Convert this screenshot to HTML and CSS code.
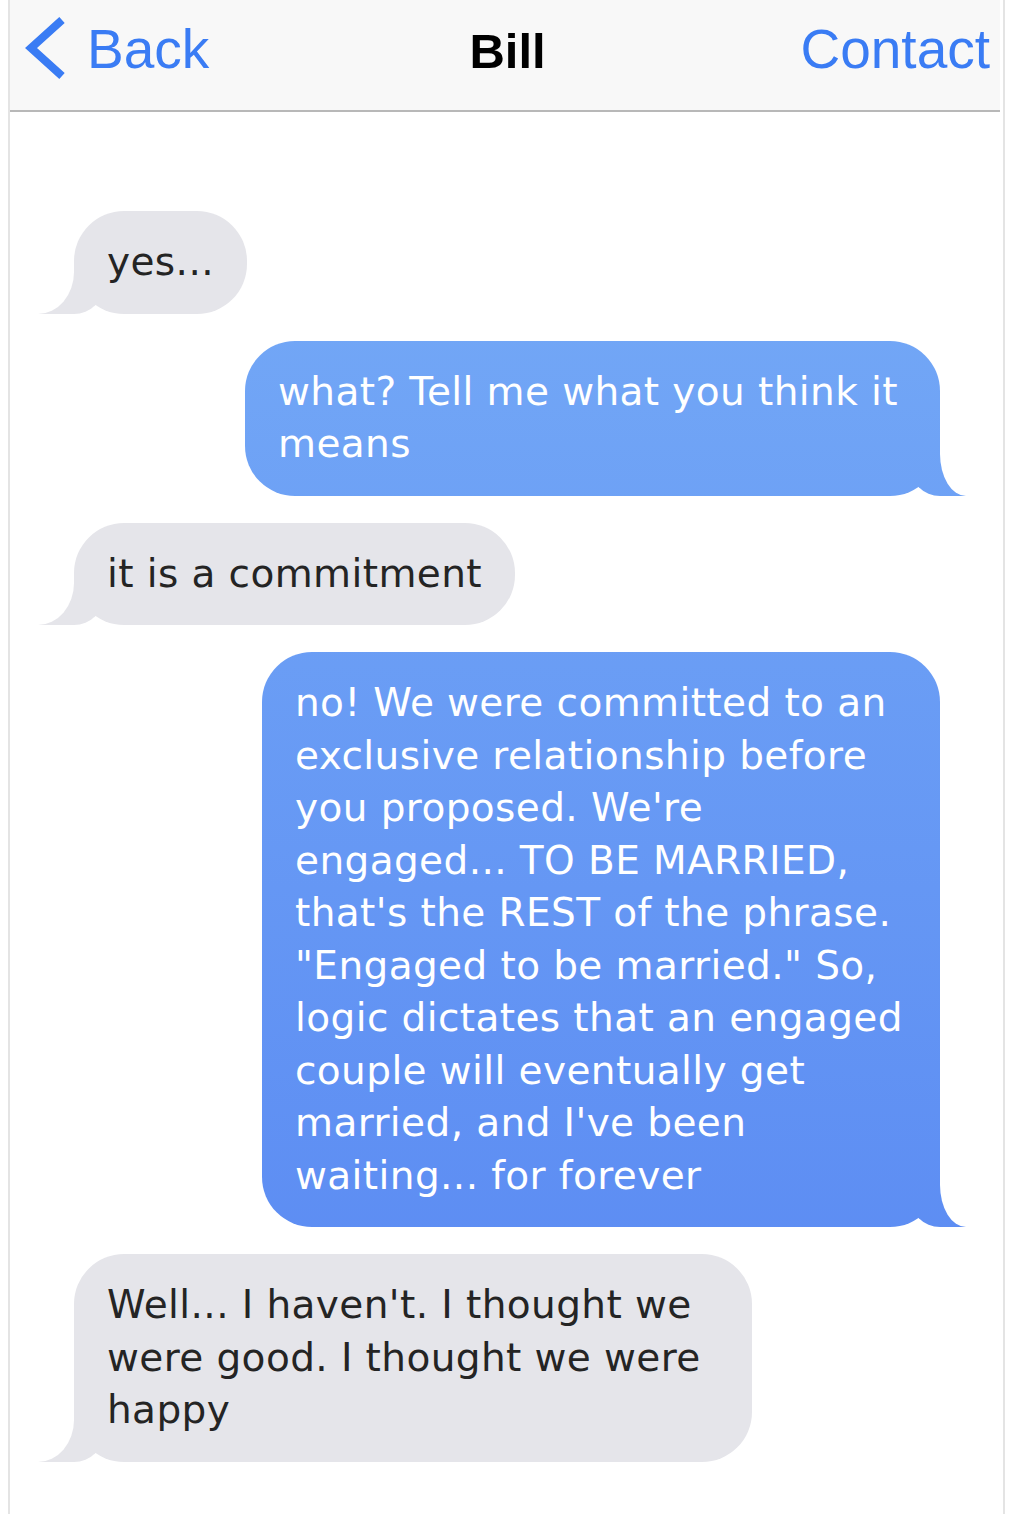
FILE: index.html
```html
<!DOCTYPE html>
<html lang="en">

<head>
  <meta charset="UTF-8" />
  <meta name="viewport" content="width=device-width, initial-scale=1.0" />
  <title>Bill</title>
  <link rel="stylesheet" href="styles.css">
</head>

<body>
  <div class="phone">
    <div class="nav-bar">
      <a class="nav-side back" href="#">
        <svg class="chevron" width="40" height="62" viewBox="0 0 40 62">
          <polyline points="37,3 6,31 37,59" fill="none" stroke="currentColor" stroke-width="8" stroke-linejoin="miter" />
        </svg>Back
      </a>
      <div class="nav-title">Bill</div>
      <a class="nav-side contact" href="#">Contact</a>
    </div>

    <div class="messages">
      <div class="msg them">yes...</div>
      <div class="msg me wide">what? Tell me what you think it means</div>
      <div class="msg them">it is a commitment</div>
      <div class="msg me">no! We were committed to an exclusive relationship before you proposed. We're engaged... TO BE MARRIED, that's the REST of the phrase. "Engaged to be married." So, logic dictates that an engaged couple will eventually get married, and I've been waiting... for forever</div>
      <div class="msg them">Well... I haven't. I thought we were good. I thought we were happy</div>
    </div>
  </div>
</body>

</html>
```

FILE: styles.css
```css
body {
  margin: 0;
  background: #fff;
  font-family: "DejaVu Sans", Verdana, sans-serif;
}

.phone {
  margin-left: 8px;
  width: 993px;
  min-height: 1514px;
  border-left: 2px solid #e4e4e4;
  border-right: 2px solid #e4e4e4;
}

/* top navigation */
.nav-bar {
  display: flex;
  align-items: baseline;
  height: 93px;
  padding: 17px 10px 0 15px;
  margin-right: 3px;
  background: #f8f8f8;
  border-bottom: 2px solid #b8b8b8;
  font-family: "Liberation Sans", Arial, sans-serif;
  line-height: 55px;
}

.nav-side {
  flex: 1;
  color: #3a7cf4;
  font-size: 55px;
  text-decoration: none;
}

.contact {
  text-align: right;
}

.chevron {
  vertical-align: -11px;
  margin-right: 22px;
}

.nav-title {
  font-size: 49px;
  font-weight: bold;
  color: #000;
}

/* chat bubbles */
.messages {
  display: flex;
  flex-direction: column;
  gap: 27px;
  padding: 99px 63px 40px 64px;
}

.msg {
  position: relative;
  max-width: 612px;
  padding: 25px 33px;
  border-radius: 50px;
  font-size: 39px;
  letter-spacing: 0.4px;
  line-height: 52.5px;
}

.msg.wide {
  max-width: 629px;
}

.msg::before,
.msg::after {
  content: "";
  position: absolute;
  bottom: 0;
  height: 50px;
}

.them {
  align-self: flex-start;
  background: #e5e5ea;
  color: #242424;
}

.them::before {
  left: -36px;
  width: 66px;
  background: #e5e5ea;
  border-bottom-right-radius: 30px;
}

.them::after {
  left: -40px;
  width: 40px;
  background: #fff;
  border-bottom-right-radius: 36px 42px;
}

.me {
  align-self: flex-end;
  color: #fff;
  background: linear-gradient(to bottom, #79aff7, #5786f2) fixed;
}

.me::before {
  right: -26px;
  width: 56px;
  background: linear-gradient(to bottom, #79aff7, #5786f2) fixed;
  border-bottom-left-radius: 30px;
}

.me::after {
  right: -40px;
  width: 40px;
  background: #fff;
  border-bottom-left-radius: 26px 42px;
}
```
